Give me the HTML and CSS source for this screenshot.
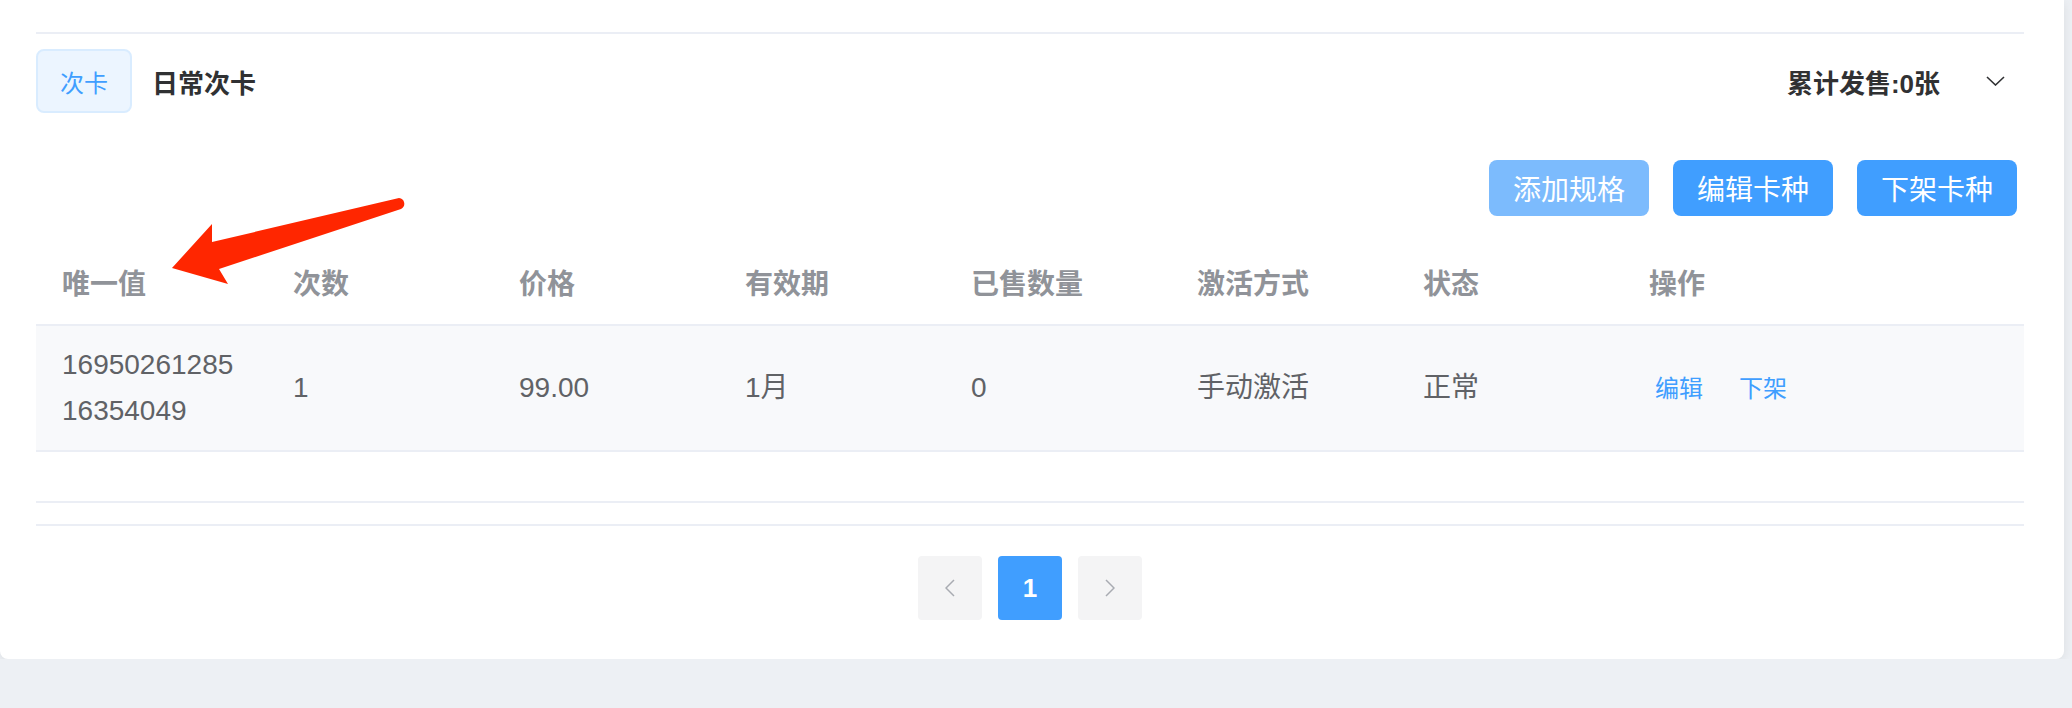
FILE: index.html
```html
<!DOCTYPE html>
<html lang="zh-CN">
<head>
  <meta charset="UTF-8">
  <meta name="viewport" content="width=device-width, initial-scale=1.0">
  <title>日常次卡</title>
  <link rel="stylesheet" href="styles.css">
</head>
<body>
  <div class="card">
    <svg class="mark-arrow" width="420" height="300" viewBox="0 0 420 300">
      <path d="M172 268 L212 224 L212 242 L399 198 A5.8 5.8 0 0 1 401 209 L219 269 L228 284 Z" fill="#ff2600"/>
    </svg>

    <div class="divider"></div>

    <div class="card-head">
      <span class="tag">次卡</span>
      <span class="card-title">日常次卡</span>
      <span class="sold">累计发售:0张</span>
      <span class="fold">
        <svg width="19" height="10" viewBox="0 0 19 10"><polyline points="1,1 9.5,9 18,1" fill="none" stroke="#303133" stroke-width="1.6"/></svg>
      </span>
    </div>

    <div class="toolbar">
      <button class="btn btn-disabled">添加规格</button>
      <button class="btn">编辑卡种</button>
      <button class="btn">下架卡种</button>
    </div>

    <div class="spec-table">
      <div class="spec-row spec-head">
        <div class="cell">唯一值</div>
        <div class="cell">次数</div>
        <div class="cell">价格</div>
        <div class="cell">有效期</div>
        <div class="cell">已售数量</div>
        <div class="cell">激活方式</div>
        <div class="cell">状态</div>
        <div class="cell">操作</div>
      </div>
      <div class="spec-row spec-body">
        <div class="cell cell-id">1695026128516354049</div>
        <div class="cell">1</div>
        <div class="cell">99.00</div>
        <div class="cell">1月</div>
        <div class="cell">0</div>
        <div class="cell">手动激活</div>
        <div class="cell">正常</div>
        <div class="cell">
          <a class="op-link">编辑</a><a class="op-link">下架</a>
        </div>
      </div>
      <div class="spec-end"></div>
    </div>

    <div class="pager">
      <button class="page-btn">
        <svg width="10" height="18" viewBox="0 0 10 18"><polyline points="9,1 1,9 9,17" fill="none" stroke="#a8abb2" stroke-width="1.5"/></svg>
      </button>
      <button class="page-btn page-active">1</button>
      <button class="page-btn">
        <svg width="10" height="18" viewBox="0 0 10 18"><polyline points="1,1 9,9 1,17" fill="none" stroke="#a8abb2" stroke-width="1.5"/></svg>
      </button>
    </div>
  </div>
</body>
</html>
```

FILE: styles.css
```css
body {
  margin: 0;
  background: #edf0f4;
  font-family: "Liberation Sans", "Noto Sans CJK SC", sans-serif;
  color: #606266;
}
.card {
  position: relative;
  width: 2064px;
  box-sizing: border-box;
  padding: 32px 40px 39px 36px;
  background: #ffffff;
  border-radius: 0 0 8px 8px;
  box-shadow: 0 2px 12px rgba(0,0,0,0.08);
}
.mark-arrow {
  position: absolute;
  left: 0;
  top: 0;
  z-index: 2;
}
.divider {
  height: 2px;
  background: #ebeef5;
}
.card-head {
  display: flex;
  align-items: center;
  margin-top: 15px;
  height: 64px;
}
.tag {
  display: inline-flex;
  align-items: center;
  height: 64px;
  box-sizing: border-box;
  padding: 0 22px;
  background: #ecf5ff;
  border: 2px solid #d9ecff;
  border-radius: 8px;
  color: #409eff;
  font-size: 24px;
}
.card-title {
  margin-left: 20px;
  font-size: 26px;
  font-weight: 600;
  color: #303133;
}
.sold {
  margin-left: auto;
  font-size: 26px;
  font-weight: 600;
  color: #303133;
}
.fold {
  display: flex;
  margin-left: 46px;
  margin-right: 19px;
}
.toolbar {
  display: flex;
  justify-content: flex-end;
  gap: 24px;
  margin-top: 47px;
  padding-right: 7px;
}
.btn {
  width: 160px;
  height: 56px;
  border: none;
  border-radius: 8px;
  background: #409eff;
  color: #ffffff;
  font-family: "Liberation Sans", "Noto Sans CJK SC", sans-serif;
  font-size: 28px;
  padding: 0;
  cursor: pointer;
}
.btn-disabled {
  background: #7cbbfd;
  cursor: not-allowed;
}
.spec-table {
  margin-top: 30px;
}
.spec-row {
  display: grid;
  grid-template-columns: 231px repeat(6, 226px) 1fr;
  align-items: center;
  box-sizing: border-box;
  border-bottom: 2px solid #ebeef5;
}
.cell {
  padding: 0 26px;
  font-size: 28px;
  line-height: 46px;
}
.spec-head {
  height: 80px;
}
.spec-head .cell {
  color: #909399;
  font-weight: 600;
}
.spec-body {
  height: 126px;
  background: #f8f9fb;
}
.cell-id {
  word-break: break-all;
}
.op-link {
  margin-left: 6px;
  margin-right: 30px;
  font-size: 24px;
  color: #409eff;
  cursor: pointer;
}
.spec-end {
  height: 51px;
  box-sizing: border-box;
  border-bottom: 2px solid #ebeef5;
}
.pager {
  display: flex;
  justify-content: center;
  gap: 16px;
  margin-top: 21px;
  padding-top: 30px;
  border-top: 2px solid #ebeef5;
}
.page-btn {
  display: flex;
  align-items: center;
  justify-content: center;
  width: 64px;
  height: 64px;
  padding: 0;
  border: none;
  border-radius: 4px;
  background: #f4f4f5;
  cursor: pointer;
}
.page-active {
  background: #409eff;
  color: #ffffff;
  font-family: "Liberation Sans", sans-serif;
  font-size: 26px;
  font-weight: 700;
}
```
